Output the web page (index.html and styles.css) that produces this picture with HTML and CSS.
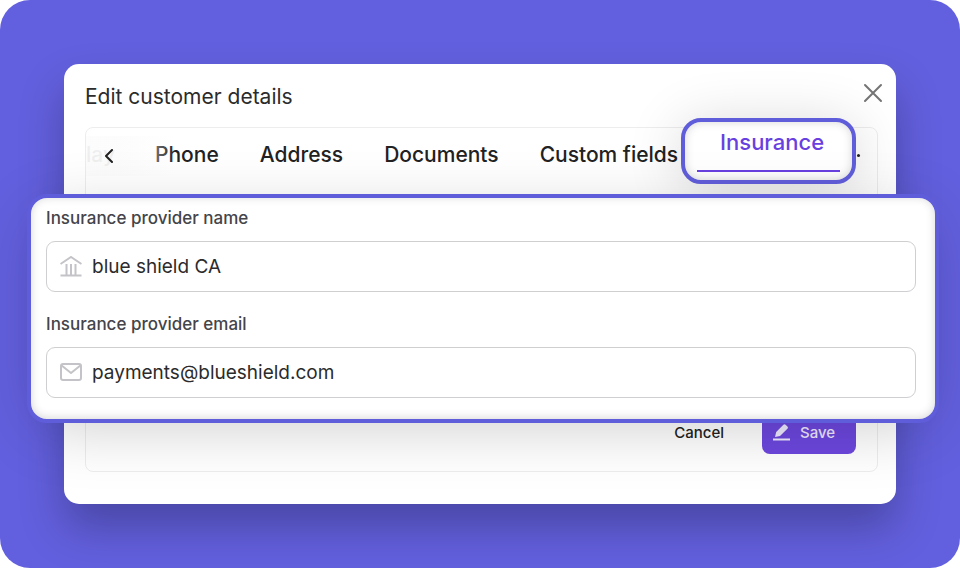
FILE: index.html
```html
<!DOCTYPE html>
<html lang="en">
<head>
    <meta charset="UTF-8">
    <meta name="viewport" content="width=device-width, initial-scale=1.0">
    <title>Edit customer details</title>
    <link rel="stylesheet" href="styles.css">
</head>
<body>
    <main class="stage">
        <div class="dialog" role="dialog" aria-labelledby="dialog-title">
            <header class="dialog-header">
                <h2 id="dialog-title">Edit customer details</h2>
                <button type="button" class="close-btn" aria-label="Close">
                    <svg width="20" height="20" viewBox="0 0 20 20" fill="none" stroke="#757575" stroke-width="2" stroke-linecap="round">
                        <path d="M2 2l16 16M18 2L2 18"/>
                    </svg>
                </button>
            </header>
            <form class="section">
                <nav class="tabs">
                    <span class="tab tab-hidden">lay</span>
                    <button type="button" class="tab">Phone</button>
                    <button type="button" class="tab">Address</button>
                    <button type="button" class="tab">Documents</button>
                    <button type="button" class="tab">Custom fields</button>
                    <div class="tab-highlight">
                        <button type="button" class="tab-active">Insurance</button>
                    </div>
                    <span class="more-dot"></span>
                    <button type="button" class="prev-btn" aria-label="Previous tabs">
                        <svg width="10" height="14" viewBox="0 0 10 14" fill="none" stroke="#222" stroke-width="2" stroke-linecap="round" stroke-linejoin="round">
                            <path d="M8 1L2 7l6 6"/>
                        </svg>
                    </button>
                </nav>
                <div class="panel">
                    <div class="form-group">
                        <label for="provider-name">Insurance provider name</label>
                        <div class="input-box">
                            <svg width="22" height="22" viewBox="0 0 22 22" fill="none" stroke="#c4c4c8" stroke-width="2">
                                <path d="M0.5 8L11 1l10.500 7M0.5 19.500h21"/>
                                <path d="M6.500 8v11M11 8v11M15.500 8v11"/>
                            </svg>
                            <input type="text" id="provider-name" value="blue shield CA">
                        </div>
                    </div>
                    <div class="form-group">
                        <label for="provider-email">Insurance provider email</label>
                        <div class="input-box">
                            <svg width="22" height="22" viewBox="0 0 22 22" fill="none" stroke="#c4c4c8" stroke-width="2" stroke-linejoin="round">
                                <rect x="1" y="2" width="20" height="16" rx="2"/>
                                <path d="M1 3l10 8 10-8"/>
                            </svg>
                            <input type="email" id="provider-email" value="payments@blueshield.com">
                        </div>
                    </div>
                </div>
                <div class="actions">
                    <button type="button" class="cancel-btn">Cancel</button>
                    <button type="submit" class="save-btn">
                        <svg width="18" height="18" viewBox="0 0 18 18" fill="#efeaff">
                            <path d="M2 14l1.200-5L10.400 1.800c0.700-0.700 1.600-0.700 2.200 0l1.800 1.800c0.700 0.700 0.700 1.500 0 2.200L7 13z"/>
                            <path d="M0 15.500h17v2H0z"/>
                        </svg>
                        Save
                    </button>
                </div>
            </form>
        </div>
    </main>
</body>
</html>
```

FILE: styles.css
```css
* {
    margin: 0;
    padding: 0;
    box-sizing: border-box;
    font-family: Inter, Arial, sans-serif;
}

body {
    background-color: white;
}

button {
    background: none;
    border: none;
    cursor: pointer;
}

svg {
    display: block;
    flex-shrink: 0;
}

.stage {
    padding: 64px;
    background-color: #6360df;
    border-radius: 30px;
    overflow: hidden;
}

.dialog {
    padding: 0 18px 32px 21px;
    background-color: white;
    border-radius: 15px;
    box-shadow: 0 24px 44px rgba(0, 0, 0, 0.26);
}

.dialog-header {
    display: flex;
    justify-content: space-between;
    align-items: flex-start;
    height: 63px;
    padding-top: 19px;
}

.dialog-header h2 {
    font-size: 21px;
    font-weight: 400;
    line-height: 28px;
    color: #2b2b2b;
}

.close-btn {
    margin-right: -5px;
}

.section {
    border: 1px solid #ededed;
    border-radius: 8px;
}

/* tabs */
.tabs {
    position: relative;
    display: flex;
    align-items: flex-start;
    height: 66px;
}

.tab {
    margin-right: 41px;
    padding-top: 15px;
    font-size: 21px;
    font-weight: 500;
    line-height: 24px;
    color: #222;
    white-space: nowrap;
}

.tab:nth-child(5) {
    margin-right: 3px;
}

.tab-hidden {
    width: 28px;
    color: #555;
}

.tabs::before {
    content: "";
    position: absolute;
    left: 0;
    top: 8px;
    width: 90px;
    height: 40px;
    background: linear-gradient(90deg, rgba(252, 252, 252, 0.92) 40%, rgba(252, 252, 252, 0));
}

.prev-btn {
    position: absolute;
    left: 18px;
    top: 21px;
}

.tab-highlight {
    flex-shrink: 0;
    width: 175px;
    height: 66px;
    margin-top: -10px;
    padding: 8px 12px;
    background-color: white;
    border: 4px solid #605dda;
    border-radius: 20px;
    box-shadow: 0 6px 56px rgba(0, 0, 0, 0.16), inset 0 0 10px rgba(0, 0, 0, 0.16);
}

.tab-active {
    width: 100%;
    height: 42px;
    padding: 0 0 16px 7px;
    border-bottom: 2px solid #6940e0;
    font-size: 22px;
    font-weight: 500;
    line-height: 24px;
    color: #6940e0;
}

.more-dot {
    width: 3px;
    height: 3px;
    margin: 26px 0 0 1px;
    border-radius: 50%;
    background-color: #222;
}

/* provider panel, wider than the dialog it belongs to */
.panel {
    position: relative;
    margin: 0 -62px 0 -59px;
    padding: 8px 19px 21px 15px;
    background-color: white;
    border: 4px solid #605dda;
    border-radius: 20px;
    box-shadow: 0 12px 64px -8px rgba(0, 0, 0, 0.2), inset 0 -1px 10px rgba(0, 0, 0, 0.16);
}

.form-group + .form-group {
    margin-top: 20px;
}

.form-group label {
    display: block;
    margin-bottom: 11px;
    font-size: 17px;
    font-weight: 500;
    line-height: 24px;
    color: #444449;
}

.input-box {
    display: flex;
    align-items: center;
    gap: 10px;
    height: 51px;
    padding: 0 13px;
    border: 1px solid #cfcfd2;
    border-radius: 9px;
}

.input-box input {
    flex: 1;
    min-width: 0;
    border: none;
    outline: none;
    background: none;
    font-size: 19px;
    line-height: 28px;
    color: #2b2b2b;
}

/* buttons */
.actions {
    display: flex;
    justify-content: flex-end;
    gap: 38px;
    margin-top: -13px;
    padding: 0 21px 17px;
}

.actions button {
    height: 44px;
    font-size: 15px;
    font-weight: 500;
}

.cancel-btn {
    color: #222;
}

.save-btn {
    display: flex;
    align-items: center;
    gap: 9px;
    width: 94px;
    padding: 0 11px;
    background-color: #6d47de;
    border-radius: 8px;
    color: #efeaff;
}
```
